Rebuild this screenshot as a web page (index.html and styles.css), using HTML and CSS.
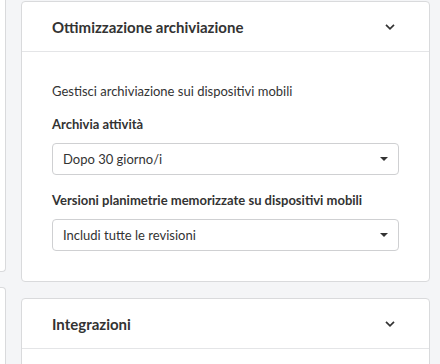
FILE: index.html
```html
<!DOCTYPE html>
<html lang="it">
<head>
<meta charset="utf-8">
<link rel="stylesheet" href="styles.css">
</head>
<body>
<div class="layout">
  <div class="side">
    <div class="side-card side-card--top"></div>
    <div class="side-card side-card--bottom"></div>
  </div>
  <div class="main">
    <section class="card">
      <header class="card-head">
        <h2 class="card-title">Ottimizzazione archiviazione</h2>
        <svg class="chevron" width="10" height="6" viewBox="0 0 10 6"><path d="M1 0.8 L5 4.8 L9 0.8" fill="none" stroke="#333" stroke-width="1.7"/></svg>
      </header>
      <div class="card-body">
        <p class="desc">Gestisci archiviazione sui dispositivi mobili</p>
        <label class="field-label">Archivia attività</label>
        <div class="select">
          <span>Dopo 30 giorno/i</span>
          <span class="caret"></span>
        </div>
        <label class="field-label">Versioni planimetrie memorizzate su dispositivi mobili</label>
        <div class="select">
          <span>Includi tutte le revisioni</span>
          <span class="caret"></span>
        </div>
      </div>
    </section>
    <section class="card card--collapsed">
      <header class="card-head">
        <h2 class="card-title">Integrazioni</h2>
        <svg class="chevron" width="10" height="6" viewBox="0 0 10 6"><path d="M1 0.8 L5 4.8 L9 0.8" fill="none" stroke="#333" stroke-width="1.7"/></svg>
      </header>
    </section>
  </div>
</div>
</body>
</html>
```
FILE: styles.css
```css
html, body {
  margin: 0;
  padding: 0;
}
body {
  background: #f4f5f7;
  font-family: Lato, "Open Sans", sans-serif;
  color: #333;
  width: 440px;
  height: 364px;
  overflow: hidden;
}
.layout {
  display: grid;
  grid-template-columns: 6px 409px;
  column-gap: 15px;
}
.side {
  display: flex;
  flex-direction: column;
  gap: 15px;
}
.side-card {
  background: #fff;
  border: 1px solid #d9dadc;
  border-left: none;
  border-radius: 0 4px 4px 0;
}
.side-card--top {
  height: 271px;
  border-top: none;
  border-radius: 0 0 4px 0;
}
.side-card--bottom {
  height: 120px;
}
.main {
  display: flex;
  flex-direction: column;
  gap: 16px;
  padding-top: 1px;
}
.card {
  background: #fff;
  border: 1px solid #d9dadc;
  border-radius: 4px;
}
.card-head {
  height: 49px;
  border-bottom: 1px solid #e4e5e7;
  display: flex;
  align-items: center;
  justify-content: space-between;
  padding: 0 34px 0 30px;
}
.card-title {
  margin: 0;
  font-size: 15px;
  font-weight: 700;
  color: #333;
}
.chevron {
  display: block;
}
.card-body {
  padding: 31px 30px 30px 30px;
  display: flex;
  flex-direction: column;
}
.desc {
  margin: 0;
  font-size: 13px;
  line-height: 16px;
}
.field-label {
  margin-top: 17px;
  font-size: 13px;
  font-weight: 700;
  line-height: 16px;
}
.select {
  margin-top: 11px;
  height: 30px;
  border: 1px solid #cfd0d2;
  border-radius: 4px;
  display: flex;
  align-items: center;
  justify-content: space-between;
  padding: 0 10px 0 10px;
  font-size: 13px;
}
.caret {
  width: 0;
  height: 0;
  border-left: 4px solid transparent;
  border-right: 4px solid transparent;
  border-top: 4px solid #333;
}
.card--collapsed {
  height: 80px;
}
```
